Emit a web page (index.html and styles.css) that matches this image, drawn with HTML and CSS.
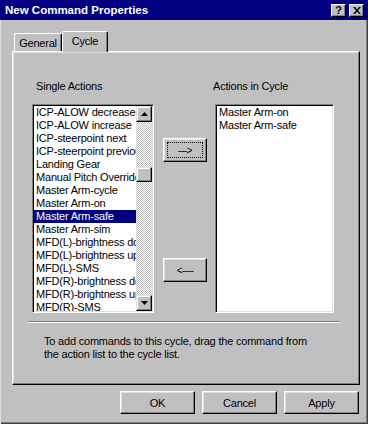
FILE: index.html
```html
<!DOCTYPE html>
<html lang="en">
<head>
    <meta charset="UTF-8">
    <title>New Command Properties</title>
    <link rel="stylesheet" href="styles.css">
</head>
<body>
    <div class="window">
        <div class="titlebar">
            <span class="title">New Command Properties</span>
            <div class="caption-buttons">
                <span class="cap-btn help">?</span>
                <span class="cap-btn close">
                    <svg width="8" height="7" viewBox="0 0 8 7"><path d="M0 0h2l2 2.5L6 0h2L5 3.5 8 7H6L4 4.5 2 7H0l3-3.5z" fill="#000"/></svg>
                </span>
            </div>
        </div>

        <div class="tabs">
            <div class="tab">General</div>
            <div class="tab active">Cycle</div>
        </div>

        <div class="panel">
            <div class="columns">
                <div class="label label-left">Single Actions</div>
                <div></div>
                <div class="label label-right">Actions in Cycle</div>

                <div class="listbox">
                    <ul class="items">
                        <li>ICP-ALOW decrease</li>
                        <li>ICP-ALOW increase</li>
                        <li>ICP-steerpoint next</li>
                        <li>ICP-steerpoint previous</li>
                        <li>Landing Gear</li>
                        <li>Manual Pitch Override</li>
                        <li>Master Arm-cycle</li>
                        <li>Master Arm-on</li>
                        <li class="selected">Master Arm-safe</li>
                        <li>Master Arm-sim</li>
                        <li>MFD(L)-brightness down</li>
                        <li>MFD(L)-brightness up</li>
                        <li>MFD(L)-SMS</li>
                        <li>MFD(R)-brightness down</li>
                        <li>MFD(R)-brightness up</li>
                        <li>MFD(R)-SMS</li>
                    </ul>
                    <div class="scrollbar">
                        <div class="scroll-btn">
                            <svg width="7" height="4" viewBox="0 0 7 4"><path d="M3.5 0L7 4H0z" fill="#000"/></svg>
                        </div>
                        <div class="track">
                            <div class="thumb"></div>
                        </div>
                        <div class="scroll-btn">
                            <svg width="7" height="4" viewBox="0 0 7 4"><path d="M0 0h7L3.5 4z" fill="#000"/></svg>
                        </div>
                    </div>
                </div>

                <div class="move-buttons">
                    <button class="btn move focused"><span class="focus-ring">---&gt;</span></button>
                    <button class="btn move"><span class="focus-ring plain">&lt;----</span></button>
                </div>

                <div class="listbox">
                    <ul class="items">
                        <li>Master Arm-on</li>
                        <li>Master Arm-safe</li>
                    </ul>
                </div>
            </div>

            <div class="separator"></div>

            <p class="hint">To add commands to this cycle, drag the command from<br>the action list to the cycle list.</p>
        </div>

        <div class="dialog-buttons">
            <button class="btn dialog">OK</button>
            <button class="btn dialog">Cancel</button>
            <button class="btn dialog">Apply</button>
        </div>
    </div>
</body>
</html>
```

FILE: styles.css
```css
/* Win98 style property sheet */
body {
    margin: 0;
    background: #c0c0c0;
    font-family: "Liberation Sans", Arial, sans-serif;
    font-size: 11px;
    letter-spacing: -0.2px;
    color: #000;
}
.window {
    width: 368px;
    height: 424px;
    box-sizing: border-box;
    background: #c0c0c0;
    box-shadow: inset 1px 0 #dfdfdf, inset -1px -1px #404040, inset -2px -2px #808080;
    display: flex;
    flex-direction: column;
}

/* title bar */
.titlebar {
    height: 20px;
    box-sizing: border-box;
    padding: 1px 4px 0 5px;
    background: #000080;
    color: #fff;
    display: flex;
    align-items: center;
    justify-content: space-between;
}
.title {
    font-weight: bold;
    font-size: 11.5px;
    letter-spacing: 0;
    line-height: 19px;
}
.caption-buttons {
    display: flex;
    gap: 3px;
    margin-top: -1px;
}
.cap-btn {
    width: 15px;
    height: 13px;
    box-sizing: border-box;
    background: #c0c0c0;
    border: 1px solid;
    border-color: #fff #000 #000 #fff;
    box-shadow: inset -1px -1px #808080;
    color: #000;
    font-weight: bold;
    font-size: 11px;
    line-height: 11px;
    text-align: center;
    display: flex;
    align-items: center;
    justify-content: center;
}

/* tabs */
.tabs {
    display: flex;
    align-items: flex-end;
    height: 20px;
    margin: 11px 0 0 14px;
    position: relative;
    z-index: 1;
}
.tab {
    height: 18px;
    box-sizing: border-box;
    padding-top: 3px;
    line-height: 13px;
    text-align: center;
    border: 1px solid;
    border-bottom: none;
    border-color: #fff #000 #000 #fff;
    border-radius: 2px 2px 0 0;
    box-shadow: inset -1px 0 #808080;
    width: 48px;
    background: #c0c0c0;
}
.tab.active {
    width: 46px;
    height: 21px;
    margin-bottom: -1px;
}

/* tab page */
.panel {
    height: 334px;
    margin: 0 8px 0 12px;
    box-sizing: border-box;
    padding: 28px 0 0 15px;
    border: 1px solid;
    border-color: #fff #000 #000 #fff;
    box-shadow: inset -1px -1px #808080, inset 1px 1px #dfdfdf;
}
.columns {
    display: grid;
    grid-template-columns: 122px 45px 119px;
    grid-template-rows: 24px 209px;
    column-gap: 8px;
    margin-left: 4px;
}
.label {
    line-height: 13px;
}
.label-left {
    margin-left: 4px;
}
.label-right {
    margin-left: -2px;
}

/* list boxes */
.listbox {
    box-sizing: border-box;
    border: 1px solid;
    border-color: #808080 #fff #fff #808080;
    box-shadow: inset 1px 1px #000, inset -1px -1px #dfdfdf;
    padding: 1px;
    background: #fff;
    display: flex;
    overflow: hidden;
}
.items {
    list-style: none;
    margin: 0;
    padding: 0;
    flex: 1;
    overflow: hidden;
}
.items li {
    height: 13px;
    line-height: 13px;
    padding-left: 2px;
    white-space: nowrap;
    overflow: hidden;
}
.items li.selected {
    background: #000080;
    color: #fff;
}
.scrollbar {
    width: 16px;
    display: flex;
    flex-direction: column;
}
.scroll-btn {
    height: 16px;
    box-sizing: border-box;
    background: #c0c0c0;
    border: 1px solid;
    border-color: #dfdfdf #000 #000 #dfdfdf;
    box-shadow: inset -1px -1px #808080, inset 1px 1px #fff;
    display: flex;
    align-items: center;
    justify-content: center;
}
.track {
    flex: 1;
    background: repeating-conic-gradient(#fff 0 25%, #c0c0c0 0 50%) 0 0 / 2px 2px;
}
.thumb {
    height: 15px;
    margin-top: 45px;
    box-sizing: border-box;
    background: #c0c0c0;
    border: 1px solid;
    border-color: #dfdfdf #000 #000 #dfdfdf;
    box-shadow: inset -1px -1px #808080, inset 1px 1px #fff;
}

/* buttons */
.btn {
    font: inherit;
    letter-spacing: inherit;
    color: #000;
    background: #c0c0c0;
    border: 1px solid;
    border-color: #fff #000 #000 #fff;
    box-shadow: inset -1px -1px #808080, inset 1px 1px #dfdfdf;
    padding: 0;
    margin: 0;
}
.move-buttons {
    display: flex;
    flex-direction: column;
    align-items: flex-end;
    gap: 96px;
    padding-top: 34px;
}
.move {
    width: 44px;
    height: 24px;
    padding: 3px;
    display: flex;
}
.focus-ring {
    flex: 1;
    border: 1px dotted #000;
    display: flex;
    align-items: center;
    justify-content: center;
    font-size: 10px;
    letter-spacing: -0.5px;
}
.focus-ring.plain {
    border-color: transparent;
}
.separator {
    width: 312px;
    height: 2px;
    margin-top: 8px;
    border-top: 1px solid #808080;
    border-bottom: 1px solid #fff;
    box-sizing: border-box;
}
.hint {
    margin: 12px 0 0 16px;
    line-height: 13px;
}

/* OK / Cancel / Apply */
.dialog-buttons {
    display: flex;
    justify-content: flex-end;
    gap: 7px;
    margin: 6px 9px 0 0;
}
.dialog {
    width: 75px;
    height: 23px;
}
```
